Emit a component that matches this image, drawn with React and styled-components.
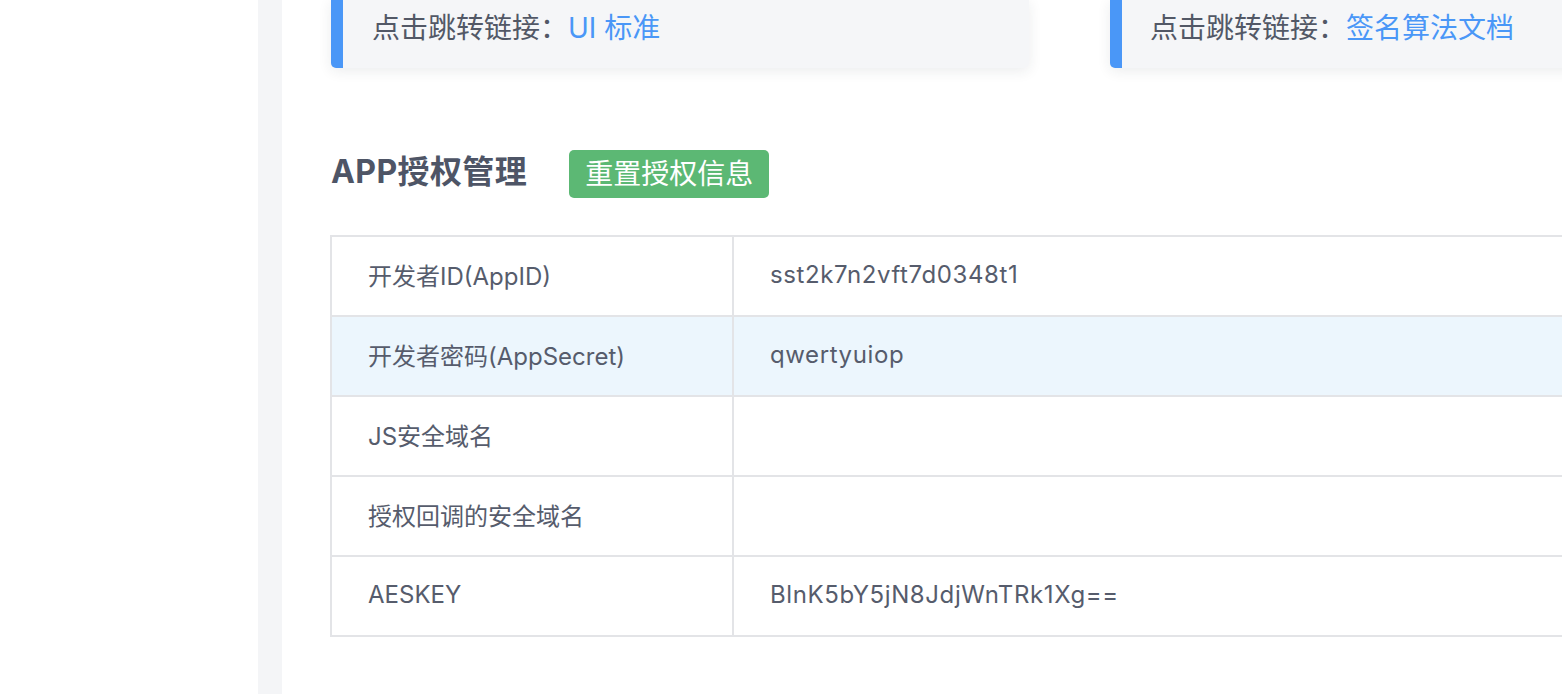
import React from "react";
import styled, { createGlobalStyle } from "styled-components";

const GlobalStyle = createGlobalStyle`
  html, body {
    margin: 0;
    padding: 0;
    background: #fff;
    overflow: hidden;
  }
  body {
    font-family: "Inter", "Noto Sans CJK SC", sans-serif;
    color: #545a6a;
  }
`;

const Page = styled.div`
  display: flex;
  width: 1562px;
  height: 694px;
  overflow: hidden;
`;

const Side = styled.div`
  flex: 0 0 258px;
  background: #fff;
`;

const Gutter = styled.div`
  flex: 0 0 24px;
  background: #f4f5f7;
`;

const Main = styled.div`
  flex: 1;
  min-width: 0;
  padding: 0 0 0 49px;
  overflow: hidden;
`;

const Cards = styled.div`
  display: grid;
  grid-template-columns: 698px 698px;
  gap: 81px;
  width: 1500px;
`;

const Card = styled.div`
  height: 68px;
  box-sizing: border-box;
  background: #f5f6f8;
  border-left: 12px solid #4a97f7;
  border-radius: 0 0 5px 5px;
  box-shadow: 0 3px 14px rgba(30, 40, 60, 0.09);
  padding: 8px 0 0 ${(p) => p.$indent}px;
  font-size: 28px;
  line-height: 40px;
  color: #525866;
  white-space: nowrap;
`;

const Link = styled.a`
  color: #4a97f7;
  text-decoration: none;
`;

const SectionHead = styled.div`
  display: flex;
  align-items: center;
  gap: 42px;
  margin-top: 82px;
  height: 48px;
`;

const Title = styled.h2`
  margin: 0 0 5px;
  font-size: 32px;
  line-height: 40px;
  font-weight: 700;
  letter-spacing: 0.4px;
  color: #4e5566;
`;

const ResetButton = styled.button`
  height: 48px;
  padding: 0 16px;
  border: none;
  border-radius: 5px;
  background: #5cb874;
  color: #fff;
  font-family: inherit;
  font-size: 28px;
  line-height: 48px;
  cursor: pointer;
`;

const Table = styled.div`
  margin: 37px 0 0 -1px;
  width: 1400px;
  border: 2px solid #e3e4e7;
  border-bottom: none;
`;

const Row = styled.div`
  display: grid;
  grid-template-columns: 400px 1fr;
  height: 80px;
  box-sizing: border-box;
  border-bottom: 2px solid #e3e4e7;
  background: ${(p) => (p.$active ? "#ecf6fd" : "#fff")};
`;

const Cell = styled.div`
  display: flex;
  align-items: center;
  padding: 0 0 3px 36px;
  font-size: 24px;
  letter-spacing: ${(p) => (p.$value ? "0.6px" : "0")};
  color: #565c6c;
  border-left: ${(p) => (p.$value ? "2px solid #e3e4e7" : "none")};
  white-space: nowrap;
`;

const rows = [
  ["开发者ID(AppID)", "sst2k7n2vft7d0348t1"],
  ["开发者密码(AppSecret)", "qwertyuiop"],
  ["JS安全域名", ""],
  ["授权回调的安全域名", ""],
  ["AESKEY", "BlnK5bY5jN8JdjWnTRk1Xg=="],
];

export default function App() {
  return (
    <>
      <GlobalStyle />
      <Page>
        <Side />
        <Gutter />
        <Main>
          <Cards>
            <Card $indent={29}>
              点击跳转链接：<Link href="#">UI 标准</Link>
            </Card>
            <Card $indent={28}>
              点击跳转链接：<Link href="#">签名算法文档</Link>
            </Card>
          </Cards>
          <SectionHead>
            <Title>APP授权管理</Title>
            <ResetButton>重置授权信息</ResetButton>
          </SectionHead>
          <Table>
            {rows.map(([k, v], i) => (
              <Row key={k} $active={i === 1}>
                <Cell>{k}</Cell>
                <Cell $value>{v}</Cell>
              </Row>
            ))}
          </Table>
        </Main>
      </Page>
    </>
  );
}
